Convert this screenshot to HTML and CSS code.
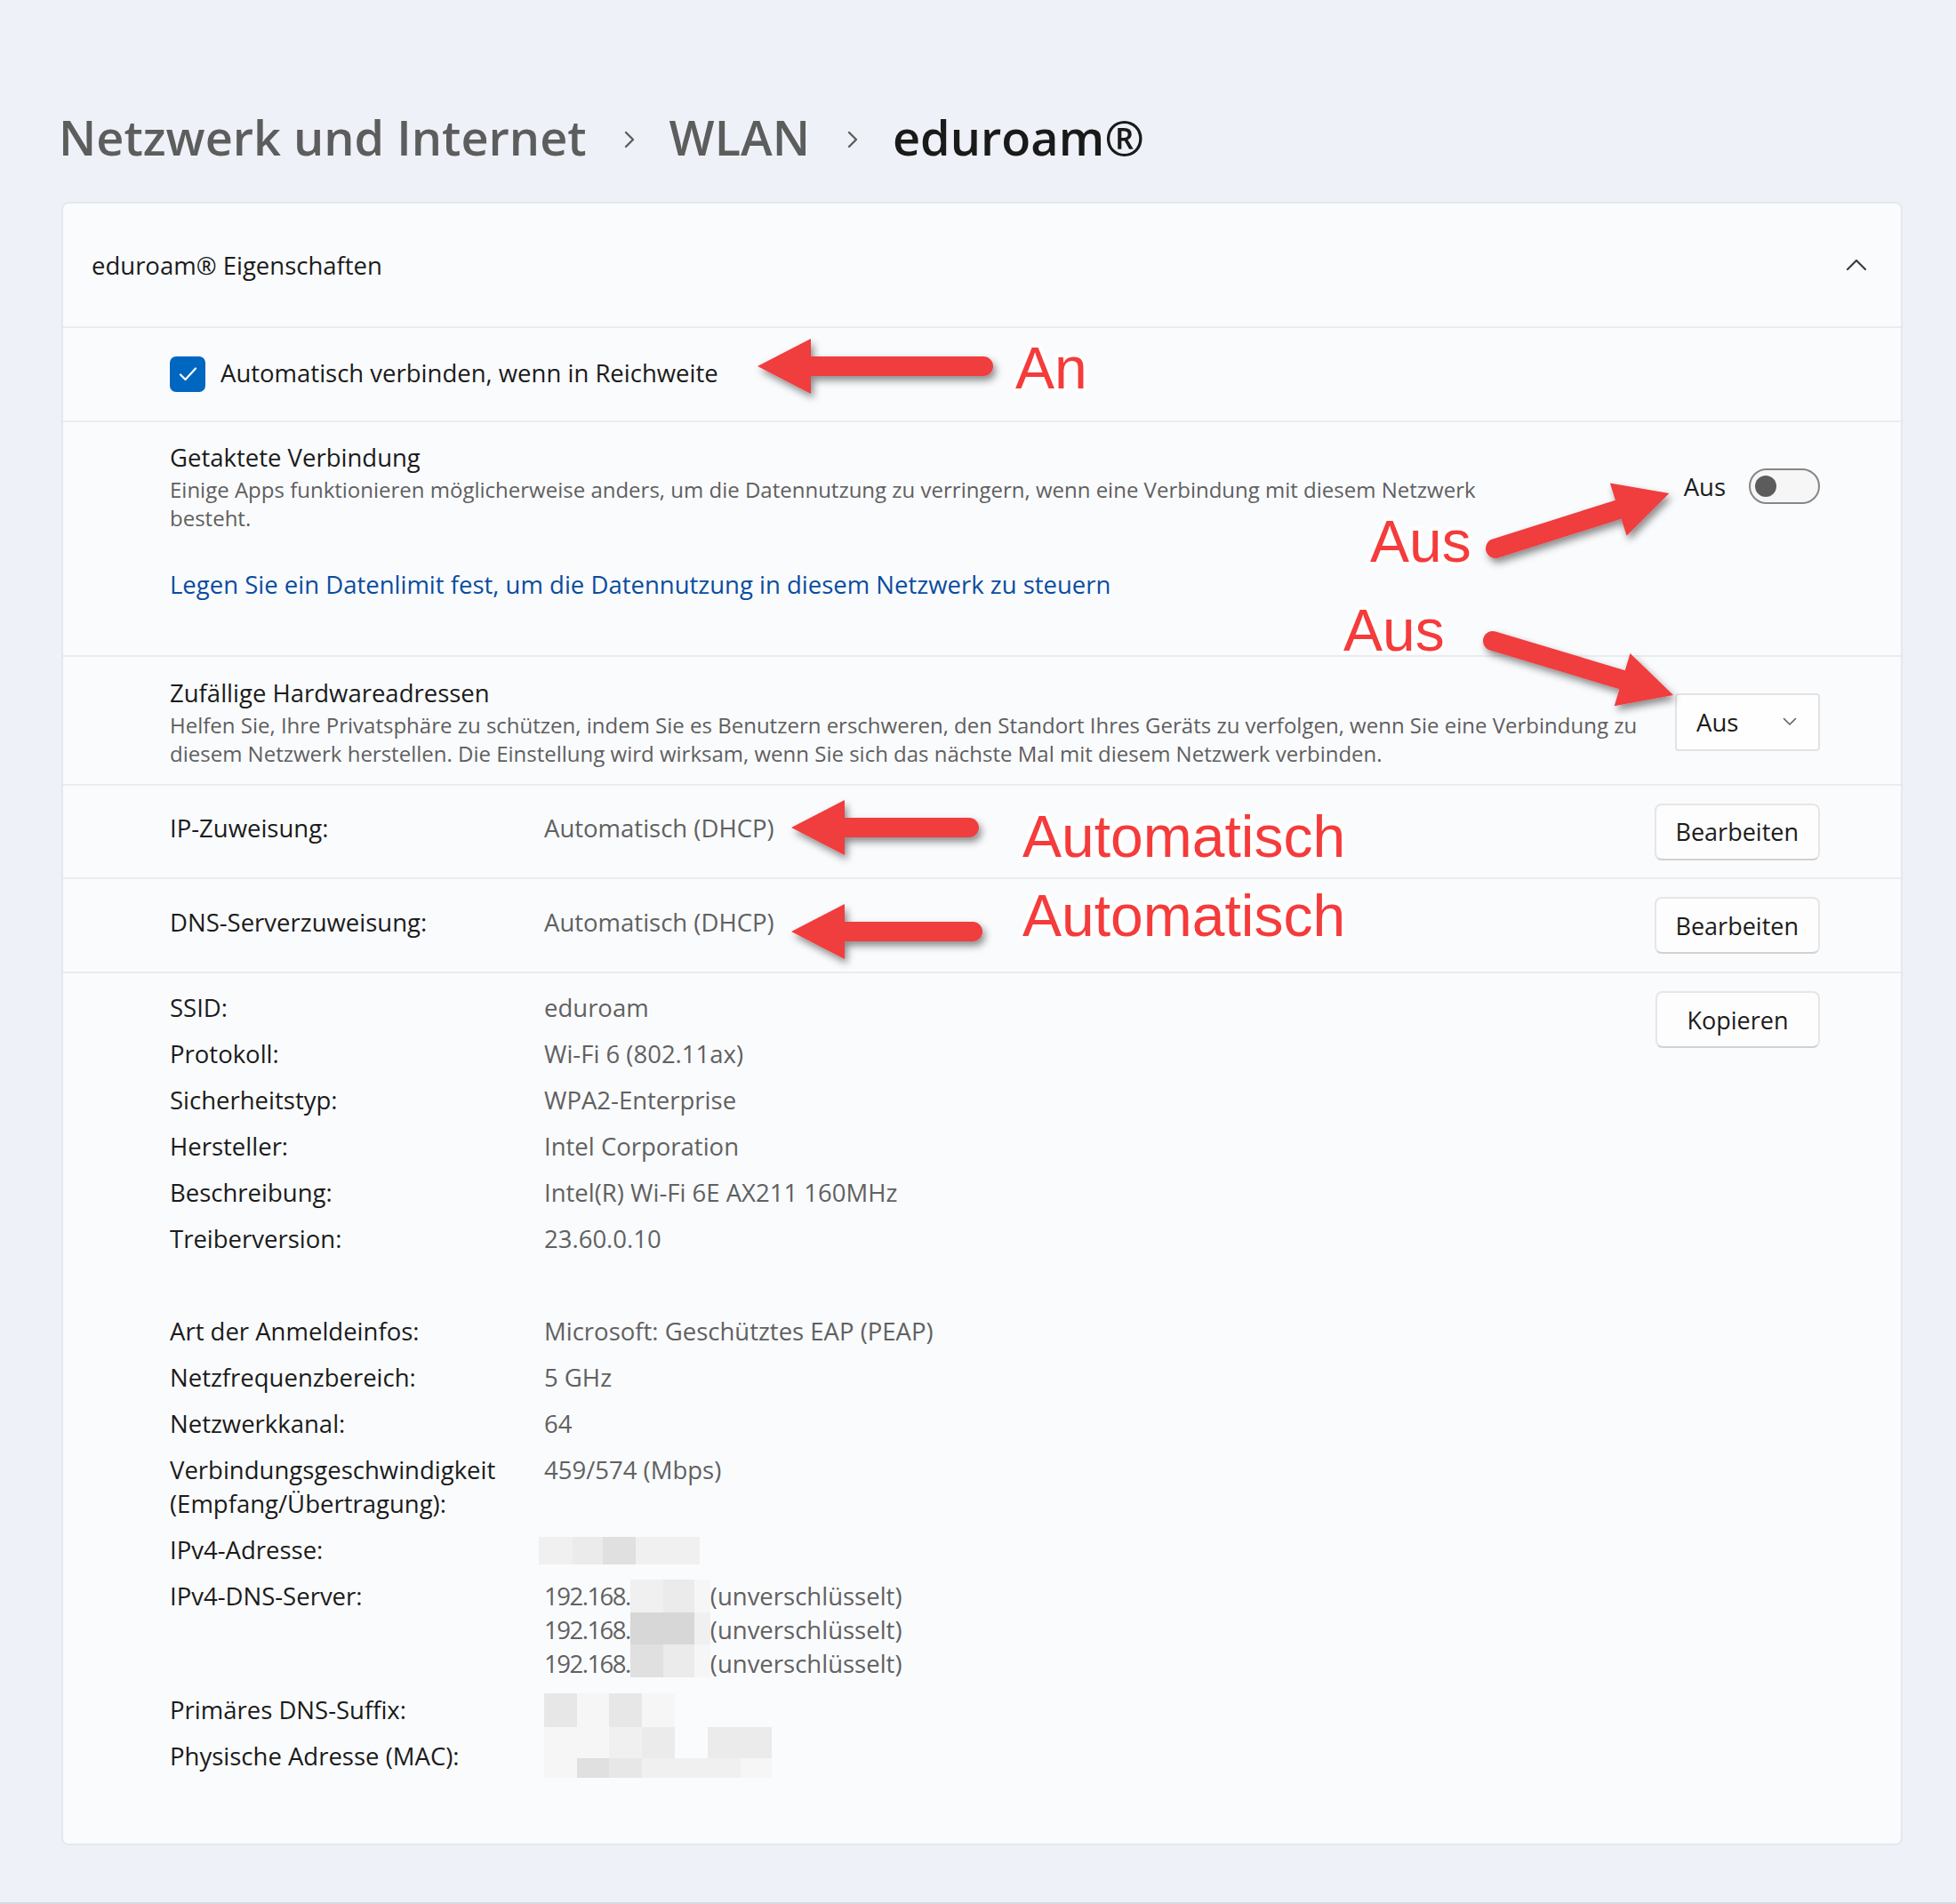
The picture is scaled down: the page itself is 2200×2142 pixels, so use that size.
FILE: index.html
```html
<!DOCTYPE html>
<html lang="de">
<head>
    <meta charset="UTF-8">
    <meta name="viewport" content="width=device-width, initial-scale=1.0">
    <title>eduroam® Eigenschaften</title>
    <link rel="stylesheet" href="styles.css">
</head>
<body>

<div class="page">

    <!-- Breadcrumb -->
    <nav class="crumbs">
        <span>Netzwerk und Internet</span>
        <svg class="crumb-sep" viewBox="0 0 14 20"><path d="M3 2 L11 10 L3 18"/></svg>
        <span>WLAN</span>
        <svg class="crumb-sep" viewBox="0 0 14 20"><path d="M3 2 L11 10 L3 18"/></svg>
        <span class="crumb-current">eduroam®</span>
    </nav>

    <section class="card">
        <header class="card-head">
            <span>eduroam® Eigenschaften</span>
            <svg class="chev-up" viewBox="0 0 24 14"><path d="M2 12 L12 2 L22 12"/></svg>
        </header>

        <!-- Automatisch verbinden -->
        <div class="row row-check">
            <span class="checkbox">
                <svg viewBox="0 0 40 40"><path d="M12 20.5 L17.5 26 L29 13.5"/></svg>
            </span>
            <span>Automatisch verbinden, wenn in Reichweite</span>
        </div>

        <!-- Getaktete Verbindung -->
        <div class="row row-setting row-metered">
            <div class="setting-top">
                <div class="setting-text">
                    <div class="setting-title">Getaktete Verbindung</div>
                    <div class="setting-desc">Einige Apps funktionieren möglicherweise anders, um die Datennutzung zu verringern, wenn eine Verbindung mit diesem Netzwerk<br>besteht.</div>
                </div>
                <div class="toggle-wrap">
                    <span>Aus</span>
                    <span class="toggle"><span class="knob"></span></span>
                </div>
            </div>
            <a class="link" href="#">Legen Sie ein Datenlimit fest, um die Datennutzung in diesem Netzwerk zu steuern</a>
        </div>

        <!-- Zufällige Hardwareadressen -->
        <div class="row row-setting row-random">
            <div class="setting-top">
                <div class="setting-text">
                    <div class="setting-title">Zufällige Hardwareadressen</div>
                    <div class="setting-desc">Helfen Sie, Ihre Privatsphäre zu schützen, indem Sie es Benutzern erschweren, den Standort Ihres Geräts zu verfolgen, wenn Sie eine Verbindung zu<br>diesem Netzwerk herstellen. Die Einstellung wird wirksam, wenn Sie sich das nächste Mal mit diesem Netzwerk verbinden.</div>
                </div>
                <div class="select">
                    <span>Aus</span>
                    <svg viewBox="0 0 16 10"><path d="M1.5 1.5 L8 8 L14.5 1.5"/></svg>
                </div>
            </div>
        </div>

        <!-- IP / DNS -->
        <div class="row row-field">
            <span class="field-text">IP-Zuweisung:</span>
            <span class="field-text value">Automatisch (DHCP)</span>
            <button class="btn">Bearbeiten</button>
        </div>
        <div class="row row-field row-dns">
            <span class="field-text">DNS-Serverzuweisung:</span>
            <span class="field-text value">Automatisch (DHCP)</span>
            <button class="btn">Bearbeiten</button>
        </div>

        <!-- Eigenschaften -->
        <div class="row details">
            <dl class="props">
                <dt>SSID:</dt><dd>eduroam</dd>
                <dt>Protokoll:</dt><dd>Wi-Fi 6 (802.11ax)</dd>
                <dt>Sicherheitstyp:</dt><dd>WPA2-Enterprise</dd>
                <dt>Hersteller:</dt><dd>Intel Corporation</dd>
                <dt>Beschreibung:</dt><dd>Intel(R) Wi-Fi 6E AX211 160MHz</dd>
                <dt>Treiberversion:</dt><dd>23.60.0.10</dd>
                <dt>&nbsp;</dt><dd></dd>
                <dt>Art der Anmeldeinfos:</dt><dd>Microsoft: Geschütztes EAP (PEAP)</dd>
                <dt>Netzfrequenzbereich:</dt><dd>5 GHz</dd>
                <dt>Netzwerkkanal:</dt><dd>64</dd>
                <dt>Verbindungsgeschwindigkeit (Empfang/Übertragung):</dt><dd>459/574 (Mbps)</dd>
                <dt>IPv4-Adresse:</dt>
                <dd class="dd-mid">
                    <span class="mosaic mosaic-ip">
                        <i class="s2"></i><i class="s3"></i><i class="s5"></i><i class="s2"></i>
                    </span>
                </dd>
                <dt>IPv4-DNS-Server:</dt>
                <dd class="dns-list">
                    <span class="ip-col ip-prefix"><span>192.168.</span><span>192.168.</span><span>192.168.</span></span>
                    <span class="mosaic mosaic-dns">
                        <i class="s2"></i><i class="s3"></i><i class="s1"></i>
                        <i class="s6"></i><i class="s6"></i><i class="s2"></i>
                        <i class="s5"></i><i class="s3"></i><i class="s1"></i>
                    </span>
                    <span class="ip-col"><span>(unverschlüsselt)</span><span>(unverschlüsselt)</span><span>(unverschlüsselt)</span></span>
                </dd>
                <dt>Primäres DNS-Suffix:</dt>
                <dd class="dd-span">
                    <span class="mosaic mosaic-mac">
                        <i class="s4"></i><i class="s1"></i><i class="s4"></i><i class="s1"></i><i></i><i></i><i></i>
                        <i class="s1"></i><i class="s1"></i><i class="s2"></i><i class="s3"></i><i></i><i class="s3"></i><i class="s3"></i>
                        <i class="s1"></i><i class="s5"></i><i class="s4"></i><i class="s2"></i><i class="s2"></i><i class="s2"></i><i class="s1"></i>
                    </span>
                </dd>
                <dt>Physische Adresse (MAC):</dt>
            </dl>
            <button class="btn">Kopieren</button>
        </div>
    </section>

    <!-- Anmerkungen (rote Pfeile) -->
    <svg class="notes" viewBox="0 0 2200 2142">
        <defs>
            <filter id="shadow" x="-30%" y="-60%" width="160%" height="220%">
                <feDropShadow dx="3" dy="5" stdDeviation="4" flood-color="#000" flood-opacity="0.45"/>
            </filter>
        </defs>
        <g filter="url(#shadow)">
            <path class="arrow" transform="translate(1106 412) rotate(180)" d="M0 -11 H194 V-31 L254 0 L194 31 V11 H0 A11 11 0 0 1 0 -11 Z"/>
        </g>
        <g filter="url(#shadow)">
            <path class="arrow" transform="translate(1682 617) rotate(-17.6)" d="M0 -11 H145 V-31 L205 0 L145 31 V11 H0 A11 11 0 0 1 0 -11 Z"/>
        </g>
        <g filter="url(#shadow)">
            <path class="arrow" transform="translate(1679 721) rotate(16.7)" d="M0 -11 H152 V-31 L212 0 L152 31 V11 H0 A11 11 0 0 1 0 -11 Z"/>
        </g>
        <g filter="url(#shadow)">
            <path class="arrow" transform="translate(1090 931) rotate(180)" d="M0 -11 H140 V-31 L200 0 L140 31 V11 H0 A11 11 0 0 1 0 -11 Z"/>
        </g>
        <g filter="url(#shadow)">
            <path class="arrow" transform="translate(1094 1048) rotate(180)" d="M0 -11 H144 V-31 L204 0 L144 31 V11 H0 A11 11 0 0 1 0 -11 Z"/>
        </g>
        <text class="note" x="1142" y="437">An</text>
        <text class="note" x="1541" y="632">Aus</text>
        <text class="note" x="1511" y="732">Aus</text>
        <text class="note" x="1150" y="964">Automatisch</text>
        <text class="note" x="1150" y="1053">Automatisch</text>
    </svg>
</div>

</body>
</html>
```

FILE: styles.css
```css
/* Seite */
body {
    margin: 0;
    background: #eef2f8;
    font-family: "Open Sans", "Noto Sans", sans-serif;
    color: #1b1b1b;
}

.page {
    position: relative;
    width: 2200px;
    height: 2142px;
    box-sizing: border-box;
    padding: 118px 0 0 69px;
    box-shadow: inset 0 -2px #d6dbe4;
}

/* Breadcrumb */
.crumbs {
    display: flex;
    align-items: center;
    height: 72px;
    line-height: 72px;
    font-size: 54px;
    font-weight: 600;
    color: #5d5d5d;
    margin-left: -3px;
}

.crumb-sep {
    width: 14px;
    height: 20px;
    margin: 6px 38px 0 41px;
    fill: none;
    stroke: #5d5d5d;
    stroke-width: 2.4;
    stroke-linecap: round;
    stroke-linejoin: round;
}

.crumb-current {
    color: #1a1a1a;
}

/* Karte */
.card {
    margin-top: 37px;
    width: 2071px;
    box-sizing: border-box;
    background: #fafbfd;
    border: 2px solid #e4e8ee;
    border-radius: 8px;
    font-size: 27.5px;
}

.card-head {
    height: 138px;
    display: flex;
    align-items: center;
    justify-content: space-between;
    padding: 0 38px 0 32px;
}

.chev-up {
    width: 24px;
    height: 14px;
    fill: none;
    stroke: #3c3c3c;
    stroke-width: 2.2;
    stroke-linecap: round;
    stroke-linejoin: round;
}

.row {
    border-top: 2px solid #e9ecf1;
    padding: 0 91px 0 120px;
}

/* Checkbox */
.row-check {
    height: 104px;
    display: flex;
    align-items: center;
    gap: 17px;
}

.row-check > span:last-child {
    margin-bottom: 3px;
}

.checkbox {
    width: 40px;
    height: 40px;
    border-radius: 7px;
    background: #0067c0;
    display: flex;
}

.checkbox svg {
    width: 40px;
    height: 40px;
    fill: none;
    stroke: #fff;
    stroke-width: 2.2;
    stroke-linecap: round;
    stroke-linejoin: round;
}

/* Einstellungen mit Beschreibung */
.row-metered {
    padding-top: 20px;
    padding-bottom: 59px;
}

.row-random {
    padding-top: 21px;
    padding-bottom: 18px;
}

.setting-top {
    display: flex;
    align-items: center;
    justify-content: space-between;
}

.setting-title {
    line-height: 40px;
}

.setting-desc {
    font-size: 24px;
    line-height: 32px;
    color: #5f5f5f;
    white-space: nowrap;
}

.link {
    display: block;
    margin-top: 39px;
    line-height: 40px;
    color: #0a4d9f;
    text-decoration: none;
}

.toggle-wrap {
    display: flex;
    align-items: center;
    gap: 26px;
}

.toggle {
    width: 80px;
    height: 40px;
    box-sizing: border-box;
    border: 2px solid #868686;
    border-radius: 20px;
    background: #f6f6f6;
    display: flex;
    align-items: center;
    padding-left: 5px;
}

.knob {
    width: 24px;
    height: 24px;
    border-radius: 50%;
    background: #5c5c5c;
}

.select {
    width: 163px;
    height: 65px;
    box-sizing: border-box;
    border: 2px solid #e3e3e3;
    border-radius: 4px;
    background: #fefefe;
    display: flex;
    align-items: center;
    justify-content: space-between;
    padding: 0 24px 0 22px;
}

.select svg {
    width: 16px;
    height: 10px;
    fill: none;
    stroke: #5f5f5f;
    stroke-width: 1.6;
    stroke-linecap: round;
    stroke-linejoin: round;
}

/* IP- und DNS-Zeilen */
.row-field {
    display: grid;
    grid-template-columns: 421px 1fr auto;
    align-items: center;
    height: 103px;
}

.row-dns {
    height: 104px;
}

.field-text {
    margin-bottom: 8px;
}

.value {
    color: #616161;
}

.btn {
    min-width: 185px;
    height: 64px;
    box-sizing: border-box;
    border: 2px solid #e6e6e6;
    border-bottom-color: #d1d1d1;
    border-radius: 8px;
    background: #fdfdfd;
    font-family: inherit;
    font-size: 27px;
    color: #1b1b1b;
    padding: 0 22px;
}

/* Eigenschaftenliste */
.details {
    display: flex;
    justify-content: space-between;
    align-items: flex-start;
    padding-top: 20px;
    padding-bottom: 79px;
}

.props {
    display: grid;
    grid-template-columns: 421px auto;
    row-gap: 14px;
    margin: 0;
    line-height: 38px;
}

.props dt {
    padding-right: 40px;
}

.props dd {
    margin: 0;
    color: #616161;
}

.dd-mid {
    align-self: center;
    display: flex;
}

.dns-list {
    display: flex;
}

.ip-col {
    display: flex;
    flex-direction: column;
}

.ip-prefix {
    letter-spacing: -1.5px;
}

.dd-span {
    grid-row: span 2;
    align-self: start;
}

/* verpixelte Bereiche */
.mosaic {
    display: grid;
}

.mosaic i {
    display: block;
}

.mosaic-ip {
    grid-template-columns: 38px 34px 37px 72px;
    grid-template-rows: 31px;
    margin-left: -6px;
}

.mosaic-dns {
    grid-template-columns: 37px 35px 18px;
    grid-template-rows: 37px 36px 37px;
}

.mosaic-mac {
    grid-template-columns: 37px 36px 37px 37px 37px 37px 35px;
    grid-template-rows: 38px 35px 22px;
    margin-bottom: -5px;
}

.s1 { background: #f6f6f6; }
.s2 { background: #f0f0f0; }
.s3 { background: #ebebeb; }
.s4 { background: #e7e7e7; }
.s5 { background: #e0e0e0; }
.s6 { background: #d7d7d7; }

/* rote Anmerkungen */
.notes {
    position: absolute;
    top: 0;
    left: 0;
    width: 2200px;
    height: 2142px;
    pointer-events: none;
}

.arrow {
    fill: #f03e3e;
}

.note {
    font-family: "Liberation Sans", Arial, sans-serif;
    font-size: 66px;
    fill: #f53b3b;
    stroke: #fff;
    stroke-width: 8px;
    stroke-linejoin: round;
    paint-order: stroke;
}
```
